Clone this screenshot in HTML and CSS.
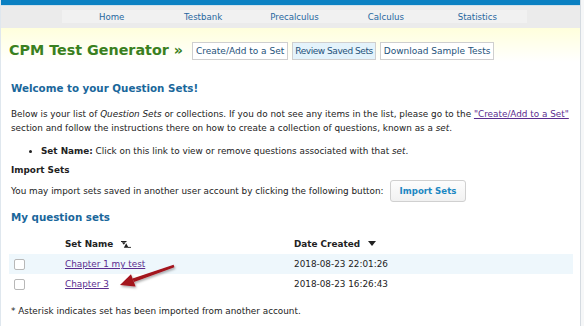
FILE: index.html
```html
<!DOCTYPE html>
<html>
<head>
<meta charset="utf-8">
<link rel="stylesheet" href="styles.css">
</head>
<body>
<div class="page">
  <div class="topbar"></div>
  <div class="navband">
    <nav class="nav">
      <a>Home</a><a>Testbank</a><a>Precalculus</a><a>Calculus</a><a>Statistics</a>
    </nav>
  </div>
  <header class="header">
    <h1 class="title">CPM Test Generator »</h1>
    <div class="tabs">
      <span class="tab">Create/Add to a Set</span>
      <span class="tab active">Review Saved Sets</span>
      <span class="tab">Download Sample Tests</span>
    </div>
  </header>
  <main class="content">
    <h2 class="h2">Welcome to your Question Sets!</h2>
    <p class="para">Below is your list of <i>Question Sets</i> or collections. If you do not see any items in the list, please go to the <a class="link">"Create/Add to a Set"</a> section and follow the instructions there on how to create a collection of questions, known as a <i>set</i>.</p>
    <ul class="list">
      <li><b>Set Name:</b> Click on this link to view or remove questions associated with that <i>set</i>.</li>
    </ul>
    <h3 class="h3">Import Sets</h3>
    <div class="import">
      <span>You may import sets saved in another user account by clicking the following button:</span>
      <span class="btn">Import Sets</span>
    </div>
    <h2 class="h2 h2b">My question sets</h2>
    <div class="table">
      <div class="row head">
        <span class="c1"></span>
        <span class="c2">Set Name <svg class="sort2" width="10" height="7" viewBox="0 0 10 7"><path d="M0 0h5.5v1H0z M0.8 1.3h4l-2 2.4z M5.2 2.2l2.4 4.6h-4.8z" fill="#222"/><path d="M7 6.8h3v-0.9H7z" fill="#222"/></svg></span>
        <span class="c3">Date Created <svg class="sort" width="8" height="5" viewBox="0 0 8 5"><path d="M0 0h8L4 5z" fill="#222"/></svg></span>
      </div>
      <div class="row odd">
        <span class="c1"><span class="cb"></span></span>
        <span class="c2"><a class="link">Chapter 1 my test</a></span>
        <span class="c3">2018-08-23 22:01:26</span>
      </div>
      <div class="row">
        <span class="c1"><span class="cb"></span></span>
        <span class="c2"><a class="link">Chapter 3</a></span>
        <span class="c3">2018-08-23 16:26:43</span>
      </div>
      <svg class="arrow" width="66" height="30" viewBox="0 0 66 30">
        <defs>
          <filter id="sh" x="-20%" y="-40%" width="140%" height="180%">
            <feDropShadow dx="1" dy="1.5" stdDeviation="1" flood-color="#000" flood-opacity="0.35"/>
          </filter>
        </defs>
        <g filter="url(#sh)" fill="#a3121d">
          <path d="M58.6 3.8 L59.4 6.2 L18.9 21 L17.6 17.6 Z"/>
          <path d="M5 24 L16 13.2 L20.6 25.6 Z"/>
        </g>
      </svg>
    </div>
    <p class="foot">* Asterisk indicates set has been imported from another account.</p>
  </main>
</div>
</body>
</html>
```
FILE: styles.css
```css
html, body {
  margin: 0;
  padding: 0;
  background: #f6f7f8;
}
body {
  width: 584px;
  height: 326px;
  overflow: hidden;
  font-family: "DejaVu Sans", Verdana, sans-serif;
  color: #222;
}
.page {
  width: 579px;
  height: 326px;
  background: #fff;
  border-left: 1px solid #dfe7ee;
  border-right: 1px solid #d5dbe1;
  display: flex;
  flex-direction: column;
}
.topbar {
  height: 5px;
  background: #0a80c2;
  border-bottom: 1px solid #cfe0ea;
}
.navband {
  height: 22px;
  background: #ebebeb;
  padding-top: 4px;
  box-sizing: border-box;
}
.nav {
  margin-left: 61px;
  width: 465px;
  height: 13px;
  background: #f1f1f1;
  display: flex;
  align-items: center;
  font-size: 8.6px;
}
.nav a {
  color: #2767a0;
  flex: 1;
  text-align: center;
}
.nav a:nth-child(1) { margin-left: 4px; }
.nav a:nth-child(5) { margin-right: 4px; }
.header {
  height: 34px;
  background: linear-gradient(#ffffdc, #ffffff);
  display: flex;
  align-items: flex-end;
  padding: 0 0 2px 8px;
  box-sizing: border-box;
}
.title {
  margin: 0 9px 0 0;
  font-size: 14.3px;
  color: #3a8020;
  font-weight: bold;
  line-height: 18px;
  position: relative;
  top: -1px;
}
.tabs {
  display: flex;
  gap: 4px;
}
.tab {
  font-size: 9px;
  border: 1px solid #cfcfcf;
  background: #fff;
  color: #24527a;
  height: 16px;
  line-height: 16px;
  padding: 0 3px;
}
.tab.active {
  background: #e4f3fb;
  letter-spacing: -0.45px;
  padding: 0 2px;
}
.content {
  padding: 0 5px 0 10px;
  font-size: 8.85px;
  line-height: 14px;
}
.h2 {
  margin: 19px 0 0 0;
  font-size: 10.3px;
  color: #1a679b;
  line-height: 14px;
}
.para {
  margin: 12px 0 0 0;
}
.link {
  color: #5b2c8f;
  text-decoration: underline;
}
.list {
  margin: 9px 0 0 0;
  padding-left: 30px;
}
.list li { line-height: 14px; }
.h3 {
  margin: 5px 0 0 0;
  font-size: 8.85px;
  line-height: 14px;
}
.import {
  margin-top: 3px;
  display: flex;
  align-items: center;
  gap: 6px;
}
.btn {
  display: inline-block;
  border: 1px solid #d0d0d0;
  border-radius: 3px;
  background: linear-gradient(#fdfdfd, #f1f1f1);
  color: #1c87c2;
  font-weight: bold;
  font-size: 8.6px;
  height: 20px;
  line-height: 20px;
  padding: 0 9px;
}
.h2b {
  margin-top: 8px;
}
.table {
  margin: 13px 0 0 -2px;
  width: 564px;
  position: relative;
}
.row {
  display: flex;
  align-items: center;
  height: 20px;
}
.row.head {
  height: 17px;
  font-weight: bold;
  align-items: flex-start;
}
.row.odd {
  background: #eef7fc;
}
.c1 {
  width: 56px;
  padding-left: 5px;
  box-sizing: border-box;
  display: flex;
  align-items: center;
}
.c2 {
  width: 229px;
}
.c3 {
  flex: 1;
}
.cb {
  width: 9px;
  height: 9px;
  border: 1px solid #b8b8b8;
  border-radius: 2px;
  background: #fff;
}
.sort2 {
  margin-left: 5px;
  vertical-align: -1px;
}
.sort {
  margin-left: 5px;
  vertical-align: 1px;
}
.arrow {
  position: absolute;
  left: 106px;
  top: 24px;
}
.foot {
  margin: 10px 0 0 0;
}
```
